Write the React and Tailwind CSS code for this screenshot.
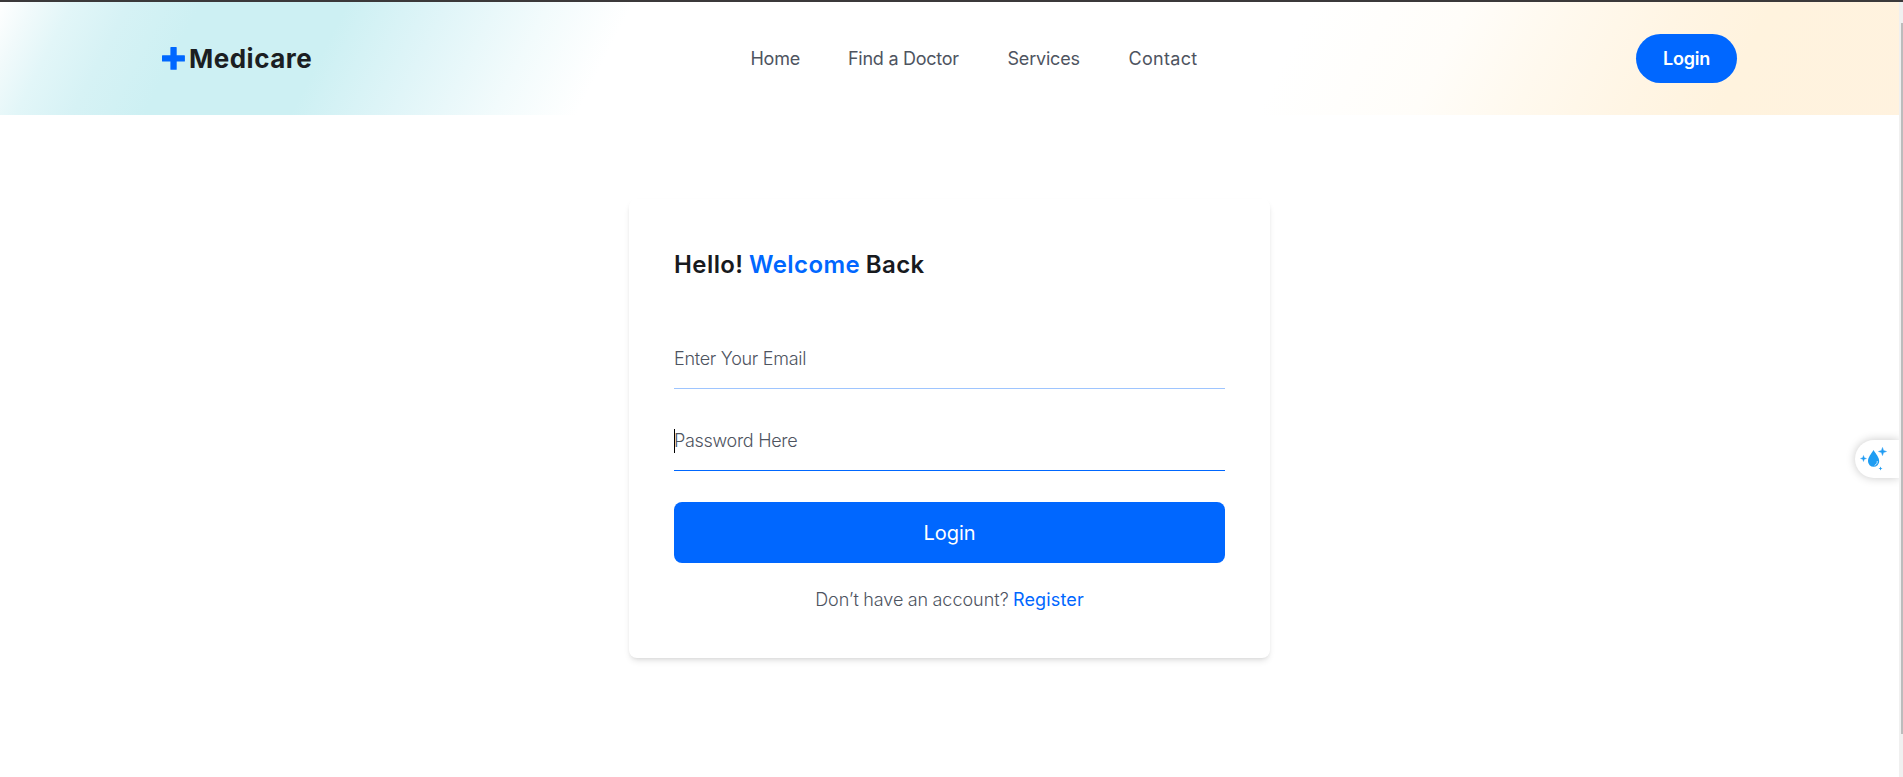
import React from "react";

const navLinks = [
  { label: "Home", className: "w-[49.5px] tracking-[-0.26px]" },
  { label: "Find a Doctor", className: "w-[111.5px] tracking-[-0.26px]" },
  { label: "Services", className: "w-[73px] tracking-[-0.2px]" },
  { label: "Contact", className: "w-[71px] tracking-[0.3px]" },
];

function Logo() {
  return (
    <div className="flex w-[152px] items-center gap-[4px]">
      <svg width="23" height="23" viewBox="0 0 23 23" className="shrink-0">
        <path
          d="M9 0h5.200q.5 0 .5.500v7.700h7.600q.6 0 .6.600v5.200q0 .6-.6.600h-7.600v7.600q0 .6-.5.600H9q-.6 0-.6-.6v-7.600H.6q-.6 0-.6-.6V8.800q0-.6.600-.6h7.800V.5Q8.400 0 9 0z"
          fill="#0067ff"
        />
      </svg>
      <span className="whitespace-nowrap pt-px text-[26px] font-bold leading-[30px] tracking-[0.5px] text-[#1b1e22]">
        Medicare
      </span>
    </div>
  );
}

function Header() {
  return (
    <header className="flex h-[113px] items-center justify-between bg-[linear-gradient(117deg,#fff_0px,#f1fafb_30px,#e2f6f8_65px,#d6f2f5_115px,#cdf0f3_180px,#cdf0f3_310px,#e0f5f8_400px,#f2fbfc_490px,#fff_565px,#fff_1170px,#fffdf9_1310px,#fff9ee_1400px,#fff5e4_1500px,#fff3de_1580px,#fff2df_1770px)] px-[162px]">
      <Logo />
      <nav className="flex gap-12">
        {navLinks.map((link) => (
          <a key={link.label} className={"whitespace-nowrap text-[18px] leading-7 text-[#4e545f] " + link.className}>
            {link.label}
          </a>
        ))}
      </nav>
      <button className="h-[49px] w-[101px] rounded-full bg-[#0067ff] text-[18px] font-semibold tracking-[-0.2px] text-white">
        Login
      </button>
    </header>
  );
}

function LoginForm() {
  return (
    <form className="h-[459px] w-[641px] rounded-lg px-[45px] pt-[48px] shadow-md">
      <h3 className="text-[24px] font-semibold leading-9 tracking-[0.42px] [word-spacing:-0.9px] text-[#181a1e]">
        Hello! <span className="text-[#0067ff]">Welcome</span> Back
      </h3>
      <div className="mt-[62px] flex h-[44px] border-b border-[#0066ff61] text-[18px] font-light leading-[27px] tracking-[-0.28px] text-[#4e545f]">
        Enter Your Email
      </div>
      <div className="mt-[38px] flex h-[44px] border-b border-[#0067ff]">
        <span className="mt-[2px] h-6 w-px bg-black" />
        <span className="-ml-px text-[18px] font-light leading-[27px] tracking-[-0.3px] text-[#4e545f]">
          Password Here
        </span>
      </div>
      <button className="mt-[31px] h-[61px] w-full rounded-lg bg-[#0067ff] text-[20px] text-white">Login</button>
      <p className="mt-[23px] text-center text-[18px] font-light leading-7 [word-spacing:-0.8px] text-[#4e545f]">
        Don’t have an account? <a className="font-normal tracking-[0.15px] text-[#0067ff]">Register</a>
      </p>
    </form>
  );
}

function Droplet() {
  return (
    <svg width="44" height="38" viewBox="0 0 44 38" fill="#1f9df2">
      <path d="M18.500 10c-2.300 4-5.500 7.200-5.500 11.200a5.600 5.600 0 0 0 11.200 0C24.200 17.200 20.800 14 18.500 10z" />
      <path d="M22.300 21.500c0 1.800-.9 3-2.300 3.700" fill="none" stroke="#fff" strokeWidth="0.800" strokeLinecap="round" />
      <path d="M27.500 7.500l1 3 3 1-3 1-1 3-1-3-3-1 3-1z" stroke="#2a9df4" strokeWidth=".5" />
      <path d="M8.500 15.500l.8 2.200 2.200.8-2.200.8-.8 2.200-.8-2.200-2.200-.8 2.200-.8z" stroke="#2a9df4" strokeWidth=".4" />
      <path d="M25.500 26.500l.6 1.400 1.400.6-1.400.6-.6 1.400-.6-1.400-1.400-.6 1.400-.6z" />
    </svg>
  );
}

export default function App() {
  return (
    <div className="relative flex h-[777px] w-[1903px] flex-col overflow-hidden bg-white font-['Inter',sans-serif]">
      <div className="h-0.5 bg-[#3b393a]" />
      <div className="flex flex-1">
        <div className="w-[1899px]">
          <Header />
          <main className="flex justify-center pt-[84px]">
            <LoginForm />
          </main>
        </div>
        <div className="flex w-1 justify-end bg-[#f0f0f0] pt-[21px]">
          <div className="h-[711px] w-0.5 bg-[#bcbcbc]" />
        </div>
      </div>
      <div className="absolute top-[440px] right-1 h-[38px] w-11 rounded-l-full bg-white shadow-[0_0_10px_rgba(0,0,0,0.22)] [clip-path:inset(-16px_0_-16px_-16px)]">
        <Droplet />
      </div>
    </div>
  );
}
